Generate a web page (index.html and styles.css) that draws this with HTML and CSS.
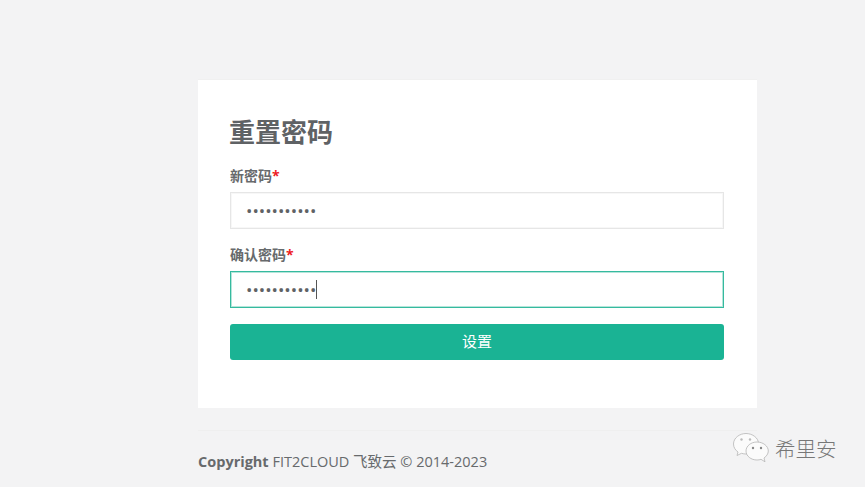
FILE: index.html

```html
<!DOCTYPE html>
<html lang="zh-CN">
<head>
  <meta charset="UTF-8" />
  <title>重置密码</title>
  <link rel="stylesheet" href="styles.css">
</head>
<body>
  <div class="wrapper">
    <div class="ibox">
      <h2>重置密码</h2>
      <form>
        <div class="form-group">
          <label>新密码<span class="required">*</span></label>
          <input class="form-control" type="password" value="12345678901" />
        </div>
        <div class="form-group">
          <label>确认密码<span class="required">*</span></label>
          <div class="input-wrap">
            <input class="form-control focus" type="password" value="12345678901" />
            <span class="caret"></span>
          </div>
        </div>
        <button class="btn" type="button">设置</button>
      </form>
    </div>
    <hr />
    <div class="footer"><strong>Copyright</strong> FIT2CLOUD 飞致云 © 2014-2023</div>
  </div>

  <div class="watermark">
    <svg width="36" height="30" viewBox="0 0 36 30" fill="none" stroke="#b5b5b5" stroke-width="0.8">
      <path d="M13 0.500C6.500 0.500 0.500 5 0.500 11C0.500 14.500 2.500 17.300 5 19L4 22.500L8.500 20.300C10 20.800 11.500 21 13 21C19.500 21 25.500 16.500 25.500 10.500C25.500 5 19.500 0.500 13 0.500Z" fill="#fbfbfb"/>
      <path d="M24 9C18 9 13 13 13 18C13 23 18 27 24 27C25.500 27 26.800 26.800 28 26.300L32 28.800L31 25C33.500 23.300 35.300 20.800 35.300 18C35.300 13 30 9 24 9Z" fill="#fbfbfb"/>
      <circle cx="8.500" cy="6.500" r="1.200" fill="#bbb" stroke="none"/>
      <circle cx="17" cy="6.500" r="1.200" fill="#bbb" stroke="none"/>
      <circle cx="20" cy="15" r="1.200" fill="#888" stroke="none"/>
      <circle cx="28" cy="15" r="1.200" fill="#888" stroke="none"/>
    </svg>
    <span>希里安</span>
  </div>
</body>
</html>
```

FILE: styles.css

```css
html, body {
  height: 100%;
}
body {
  margin: 0;
  background: #f3f3f4;
  color: #676a6c;
  font-family: "Open Sans", "Noto Sans CJK SC", sans-serif;
  font-size: 13px;
  overflow: hidden;
}
.wrapper {
  width: 559px;
  margin-left: 198px;
  padding-top: 79px;
}
.ibox {
  background: #fff;
  padding: 32px 33px 48px 32px;
  height: 329px;
  box-sizing: border-box;
  border-top: 1px solid #f0f0f0;
}
h2 {
  margin: 0 0 14px -1px;
  font-size: 26px;
  line-height: 40px;
  font-weight: 700;
  color: #5f6265;
}
label {
  display: block;
  font-weight: 700;
  font-size: 14px;
  line-height: 20px;
  margin-bottom: 6px;
}
.required {
  color: #ed1c24;
}
.form-group {
  margin-bottom: 16px;
}
.input-wrap {
  position: relative;
}
.form-control {
  display: block;
  width: 100%;
  height: 37px;
  box-sizing: border-box;
  border: 1px solid #e6e6e6;
  box-shadow: inset 0 0 0 1px #f7f7f7;
  background: #fff;
  padding: 0 15px;
  font-size: 17px;
  font-family: "Open Sans", sans-serif;
  color: #5f6265;
  outline: none;
}
.focus {
  border-color: #35ba9f;
  box-shadow: inset 0 0 0 1px #b5e5da;
}
.caret {
  position: absolute;
  left: 86px;
  top: 9px;
  width: 1px;
  height: 19px;
  background: #555;
}
.btn {
  display: block;
  width: 100%;
  height: 36px;
  padding: 0 0 3px;
  border: none;
  border-radius: 3px;
  background: #1ab394;
  color: #fff;
  font-size: 15px;
  font-family: "Open Sans", "Noto Sans CJK SC", sans-serif;
}
hr {
  margin: 22px 0 0;
  border: none;
  border-top: 1px solid #efefef;
}
.footer {
  margin-top: 21px;
  font-size: 14.5px;
  line-height: 20px;
}
.watermark {
  position: absolute;
  left: 733px;
  top: 433px;
  display: flex;
  align-items: center;
  gap: 6px;
  color: #777;
  font-size: 20.5px;
  font-weight: 300;
  font-family: "Noto Sans CJK SC", sans-serif;
}
```
